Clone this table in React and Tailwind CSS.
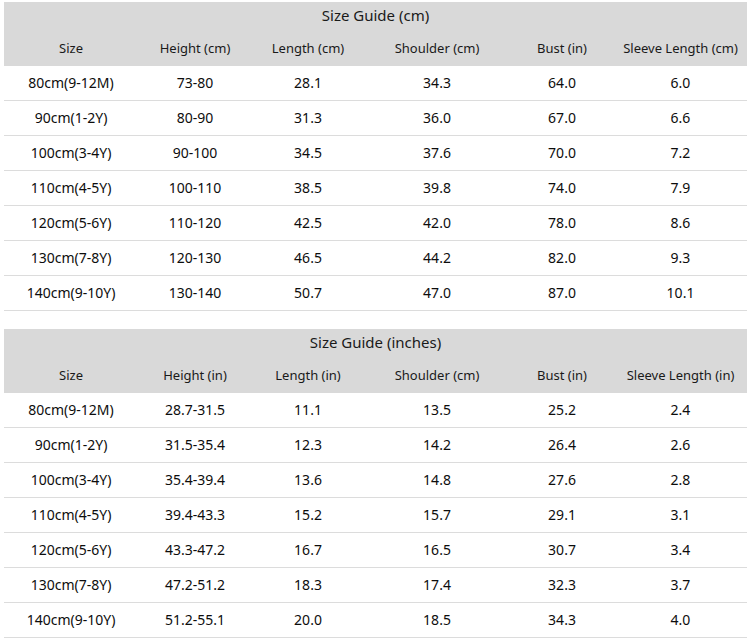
const COLS = 'grid grid-cols-[134px_114px_112px_146px_104px_133px]'

const CM = {
  title: 'Size Guide (cm)',
  head: ['Size', 'Height (cm)', 'Length (cm)', 'Shoulder (cm)', 'Bust (in)', 'Sleeve Length (cm)'],
  rows: [
    ['80cm(9-12M)', '73-80', '28.1', '34.3', '64.0', '6.0'],
    ['90cm(1-2Y)', '80-90', '31.3', '36.0', '67.0', '6.6'],
    ['100cm(3-4Y)', '90-100', '34.5', '37.6', '70.0', '7.2'],
    ['110cm(4-5Y)', '100-110', '38.5', '39.8', '74.0', '7.9'],
    ['120cm(5-6Y)', '110-120', '42.5', '42.0', '78.0', '8.6'],
    ['130cm(7-8Y)', '120-130', '46.5', '44.2', '82.0', '9.3'],
    ['140cm(9-10Y)', '130-140', '50.7', '47.0', '87.0', '10.1']
  ]
}

const INCH = {
  title: 'Size Guide (inches)',
  head: ['Size', 'Height (in)', 'Length (in)', 'Shoulder (cm)', 'Bust (in)', 'Sleeve Length (in)'],
  rows: [
    ['80cm(9-12M)', '28.7-31.5', '11.1', '13.5', '25.2', '2.4'],
    ['90cm(1-2Y)', '31.5-35.4', '12.3', '14.2', '26.4', '2.6'],
    ['100cm(3-4Y)', '35.4-39.4', '13.6', '14.8', '27.6', '2.8'],
    ['110cm(4-5Y)', '39.4-43.3', '15.2', '15.7', '29.1', '3.1'],
    ['120cm(5-6Y)', '43.3-47.2', '16.7', '16.5', '30.7', '3.4'],
    ['130cm(7-8Y)', '47.2-51.2', '18.3', '17.4', '32.3', '3.7'],
    ['140cm(9-10Y)', '51.2-55.1', '20.0', '18.5', '34.3', '4.0']
  ]
}

function SizeTable({ data }) {
  return (
    <div className="w-[743px]">
      <div className="bg-[#d9d9d9] text-[#1a1a1a]">
        <div className="h-[27px] flex items-center justify-center text-[15px]">{data.title}</div>
        <div className={`${COLS} h-[37px] items-center text-[13px] pt-[3px]`}>
          {data.head.map((h) => (
            <div key={h} className="text-center">{h}</div>
          ))}
        </div>
      </div>
      {data.rows.map((row, i) => (
        <div key={i} className={`${COLS} h-[35px] items-center border-b border-[#dcdcdc] pb-[2px] text-[14px] text-[#0d0d0d]`}>
          {row.map((c, j) => (
            <div key={j} className="text-center">{c}</div>
          ))}
        </div>
      ))}
    </div>
  )
}

export default function App() {
  return (
    <div className="w-[751px] h-[641px] bg-white px-[4px] pt-[2px] font-['Noto_Sans',sans-serif]">
      <SizeTable data={CM} />
      <div className="h-[18px]" />
      <SizeTable data={INCH} />
    </div>
  )
}
